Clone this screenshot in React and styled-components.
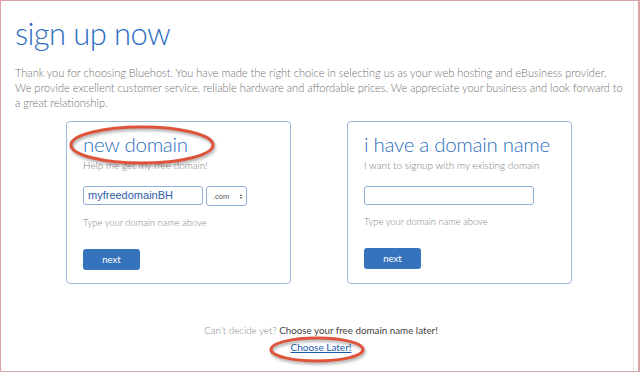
import React from "react";
import styled, { createGlobalStyle } from "styled-components";

const Global = createGlobalStyle`
  html, body { margin: 0; padding: 0; background: #fff; }
  body { font-family: Lato, "Open Sans", sans-serif; }
  * { box-sizing: border-box; }
`;

const Page = styled.div`
  position: relative;
  width: 640px;
  height: 372px;
  border: 1px solid #d9a2a5;
  border-right-width: 2px;
  overflow: hidden;
  padding: 10px 0 0 14px;
  background: #fff;
`;

const EdgeLine = styled.div`
  position: absolute;
  top: 0;
  bottom: 0;
  right: 4px;
  width: 1px;
  background: #ececec;
`;

const Title = styled.h1`
  margin: 0;
  font-family: Lato, sans-serif;
  font-weight: 300;
  font-size: 31px;
  line-height: 44px;
  color: #2d6ebf;
  letter-spacing: -0.6px;
`;

const Intro = styled.p`
  margin: 10px 0 0;
  font-family: Lato, sans-serif;
  font-weight: 300;
  font-size: 11px;
  line-height: 15px;
  color: #707070;
  white-space: nowrap;
`;

const Cards = styled.div`
  display: flex;
  gap: 56px;
  margin: 11px 0 0 51px;
`;

const Card = styled.div`
  width: 225px;
  height: 163px;
  border: 1px solid #9db8d8;
  border-radius: 4px;
  padding: 8px 16px 0;
  display: flex;
  flex-direction: column;
`;

const CardTitle = styled.h2`
  margin: 0;
  font-family: Lato, sans-serif;
  font-weight: 300;
  font-size: 20.5px;
  line-height: 28px;
  color: #2d6ebf;
  letter-spacing: -0.3px;
  white-space: nowrap;
`;

const CardSub = styled.div`
  font-family: Lato, sans-serif;
  font-weight: 300;
  font-size: 10px;
  line-height: 14px;
  color: #7e7e7e;
  white-space: nowrap;
`;

const FieldRow = styled.div`
  display: flex;
  gap: 3px;
  margin-top: 14px;
`;

const TextInput = styled.div`
  width: ${(p) => p.$w}px;
  height: 19px;
  border: 1px solid #8fb0da;
  border-radius: 3px;
  padding: 0 4px;
  font-family: Arial, "Liberation Sans", sans-serif;
  font-size: 11px;
  line-height: 17px;
  color: #2c5ea9;
`;

const Select = styled.div`
  width: 41px;
  height: 20px;
  border: 1px solid #8fb0da;
  border-radius: 3px;
  display: flex;
  align-items: center;
  justify-content: space-between;
  padding: 0 4px 0 6px;
  font-family: Arial, "Liberation Sans", sans-serif;
  font-size: 7.5px;
  color: #555;
`;

const Arrows = styled.span`
  display: flex;
  flex-direction: column;
  align-items: center;
  gap: 1px;
  &::before, &::after {
    content: "";
    width: 0;
    height: 0;
    border-left: 1.5px solid transparent;
    border-right: 1.5px solid transparent;
  }
  &::before { border-bottom: 2px solid #444; }
  &::after { border-top: 2px solid #444; }
`;

const Hint = styled.div`
  margin-top: 10px;
  font-family: Lato, sans-serif;
  font-weight: 300;
  font-size: 9.4px;
  line-height: 14px;
  color: #858585;
`;

const NextButton = styled.div`
  margin-top: 19px;
  width: 57px;
  height: 21px;
  border-radius: 3px;
  background: #3673bd;
  color: #fff;
  font-family: Lato, "Open Sans", sans-serif;
  font-size: 9.5px;
  line-height: 21px;
  text-align: center;
`;

const Footer = styled.div`
  margin-top: 38px;
  text-align: center;
  width: 612px;
  font-family: Lato, sans-serif;
  font-size: 9.8px;
  line-height: 17px;
`;

const Muted = styled.span`
  color: #858585;
  font-weight: 300;
`;

const Dark = styled.span`
  color: #444;
`;

const LaterLink = styled.a`
  color: #1d5cab;
  text-decoration: underline;
  font-family: Lato, sans-serif;
  font-size: 10px;
`;

const Ellipse = styled.svg`
  position: absolute;
  overflow: visible;
  pointer-events: none;
`;

function Mark({ x, y, w, h }) {
  return (
    <Ellipse style={{ left: x, top: y }} width={w} height={h} viewBox={`0 0 ${w} ${h}`}>
      <ellipse cx={w / 2 + 1} cy={h / 2 + 2} rx={w / 2 - 2} ry={h / 2 - 2} fill="none" stroke="rgba(0,0,0,0.35)" strokeWidth="3" style={{ filter: "blur(1.5px)" }} />
      <ellipse cx={w / 2} cy={h / 2} rx={w / 2 - 2} ry={h / 2 - 2} fill="none" stroke="#e0533b" strokeWidth="3" />
    </Ellipse>
  );
}

export default function App() {
  return (
    <>
      <Global />
      <Page>
        <EdgeLine />
        <Title>sign up now</Title>
        <Intro>
          Thank you for choosing Bluehost. You have made the right choice in selecting us as your web hosting and eBusiness provider.
          <br />
          We provide excellent customer service, reliable hardware and affordable prices. We appreciate your business and look forward to
          <br />
          a great relationship.
        </Intro>
        <Cards>
          <Card>
            <CardTitle>new domain</CardTitle>
            <CardSub>Help me get my free domain!</CardSub>
            <FieldRow>
              <TextInput $w={120}>myfreedomainBH</TextInput>
              <Select>
                .com
                <Arrows />
              </Select>
            </FieldRow>
            <Hint>Type your domain name above</Hint>
            <NextButton>next</NextButton>
          </Card>
          <Card>
            <CardTitle>i have a domain name</CardTitle>
            <CardSub>I want to signup with my existing domain</CardSub>
            <FieldRow>
              <TextInput $w={170} />
            </FieldRow>
            <Hint>Type your domain name above</Hint>
            <NextButton>next</NextButton>
          </Card>
        </Cards>
        <Footer>
          <Muted>Can't decide yet? </Muted>
          <Dark>Choose your free domain name later!</Dark>
          <br />
          <LaterLink href="#">Choose Later!</LaterLink>
        </Footer>
        <Mark x={68} y={124} w={146} h={40} />
        <Mark x={268} y={335} w={96} h={27} />
      </Page>
    </>
  );
}
